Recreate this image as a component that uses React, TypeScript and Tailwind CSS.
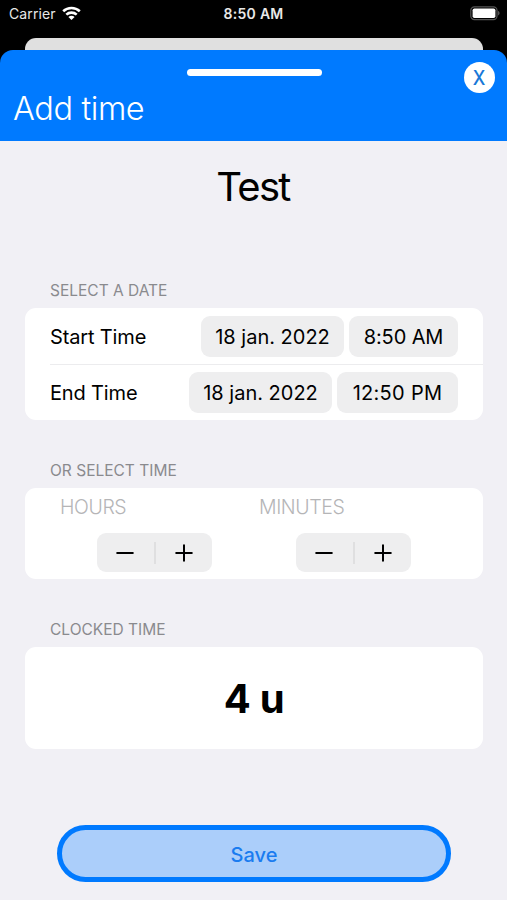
import type { ReactNode } from "react";

const rows = [
  { label: "Start Time", date: "18 jan. 2022", time: "8:50 AM", timeClass: "w-[109px] tracking-[-0.1px]" },
  { label: "End Time", date: "18 jan. 2022", time: "12:50 PM", timeClass: "w-[121px] tracking-[0.3px]" },
];

const StatusBar = () => (
  <div className="grid h-[38px] grid-cols-3 items-start bg-black text-[#e8e8e8]">
    <div className="flex items-center gap-[6px] pl-[9px] pt-[4px]">
      <span className="text-[14px] leading-[20px] tracking-[0.1px]">Carrier</span>
      <svg width="19" height="14" viewBox="0 0 19 14" fill="none" stroke="#fff" strokeWidth="2.6" className="-mt-[2px]">
        <path d="M1.2 5.2C5.8 0.9 13.2 0.9 17.8 5.2" />
        <path d="M4.3 8.6C7.2 6 11.8 6 14.7 8.6" />
        <path d="M9.5 14L6.4 10.9C8.2 9.4 10.8 9.4 12.6 10.9Z" fill="#fff" stroke="none" />
      </svg>
    </div>
    <span className="pt-[4px] text-center text-[14px] font-semibold leading-[20px] tracking-[0.3px]">8:50 AM</span>
    <div className="flex justify-end pr-[7px] pt-[6px]">
      <svg width="30" height="15" viewBox="0 0 30 15" fill="none">
        <rect x="0.8" y="0.8" width="26.2" height="12.8" rx="3.6" stroke="#555" strokeWidth="1.2" />
        <rect x="2.6" y="2.4" width="22.8" height="9.6" rx="1.8" fill="#fff" />
        <path d="M28.2 5C29.9 5.6 29.9 8.8 28.2 9.4Z" fill="#666" />
      </svg>
    </div>
  </div>
);

const Section = ({ title, className, children }: { title: string; className: string; children: ReactNode }) => (
  <section className={className}>
    <h2 className="mb-[7px] pl-[25px] text-[15.5px] leading-[20px] text-[#8a8a8e]">{title}</h2>
    {children}
  </section>
);

const Stepper = ({ label }: { label: string }) => (
  <div className="w-[199px]">
    <p className="pl-[10px] text-[19.5px] font-light leading-[24px] tracking-[-0.4px] text-[#b5b5b7]">{label}</p>
    <div className="ml-[47px] mt-[14px] flex h-[39px] w-[115px] items-center rounded-[9px] bg-[#eeeeef]">
      <button className="flex flex-1 justify-center" aria-label="Decrease">
        <svg width="18" height="18" viewBox="0 0 18 18" stroke="#000" strokeWidth="2" strokeLinecap="round">
          <path d="M1.2 9H16.8" />
        </svg>
      </button>
      <span className="h-[22px] w-[2px] bg-[#dfdfe0]" />
      <button className="flex flex-1 justify-center" aria-label="Increase">
        <svg width="18" height="18" viewBox="0 0 18 18" stroke="#000" strokeWidth="2" strokeLinecap="round">
          <path d="M1.2 9H16.8M9 1.2V16.8" />
        </svg>
      </button>
    </div>
  </div>
);

const App = () => {
  return (
    <div className="flex h-[900px] w-[507px] flex-col overflow-hidden bg-[#f1f0f5] font-['Inter',sans-serif] text-black">
      <StatusBar />
      <div className="h-[12px] bg-black pl-[25px] pr-[24px]">
        <div className="h-full rounded-t-[11px] bg-[#e0e0e0]" />
      </div>
      <div className="bg-black">
        <header className="relative flex h-[91px] flex-col items-center rounded-t-[13px] bg-[#007aff] pt-[19px]">
          <div className="ml-px h-[7px] w-[135px] rounded-full bg-white" />
          <h1 className="mt-[13px] self-start pl-[13px] text-[32.5px] font-[350] leading-[40px] tracking-[-0.4px] text-white">
            Add time
          </h1>
          <button className="absolute right-[12px] top-[12px] flex size-[31px] items-center justify-center rounded-full bg-white text-[20px] font-medium leading-none text-[#1878d8]">
            <span className="scale-x-90">X</span>
          </button>
        </header>
      </div>

      <main className="flex flex-1 flex-col pl-[25px] pr-[24px]">
        <p className="mr-[2px] mt-[21px] text-center text-[40px] leading-[50px] tracking-[-1.7px]">Test</p>

        <Section title="SELECT A DATE" className="mt-[69px]">
          <div className="rounded-[11px] bg-white pl-[25px]">
            {rows.map((row) => (
              <div
                key={row.label}
                className="flex h-[57px] items-center gap-[5px] border-b border-[#ececee] pr-[25px] text-[20px] last:h-[55px] last:border-b-0"
              >
                <span className="flex-1 pt-px tracking-[-0.15px]">{row.label}</span>
                <span className="flex h-[41px] w-[143px] items-center justify-center rounded-[9px] bg-[#eeeeef] pt-px">{row.date}</span>
                <span className={`flex h-[41px] items-center justify-center rounded-[9px] bg-[#eeeeef] pt-px ${row.timeClass}`}>
                  {row.time}
                </span>
              </div>
            ))}
          </div>
        </Section>

        <Section title="OR SELECT TIME" className="mt-[41px]">
          <div className="flex h-[91px] rounded-[11px] bg-white pl-[25px] pt-[7px]">
            <Stepper label="HOURS" />
            <Stepper label="MINUTES" />
          </div>
        </Section>

        <Section title="CLOCKED TIME" className="mt-[41px]">
          <div className="flex h-[102px] items-center justify-center rounded-[11px] bg-white pt-[2px] text-[40px] font-bold tracking-[-0.3px]">
            4 u
          </div>
        </Section>

        <button className="mx-[32px] mt-[76px] h-[57px] rounded-full border-[5px] border-[#007aff] bg-[#abcefa] pt-[2px] text-[20px] font-medium text-[#1a7cf0]">
          Save
        </button>
      </main>
    </div>
  );
};

export default App;
